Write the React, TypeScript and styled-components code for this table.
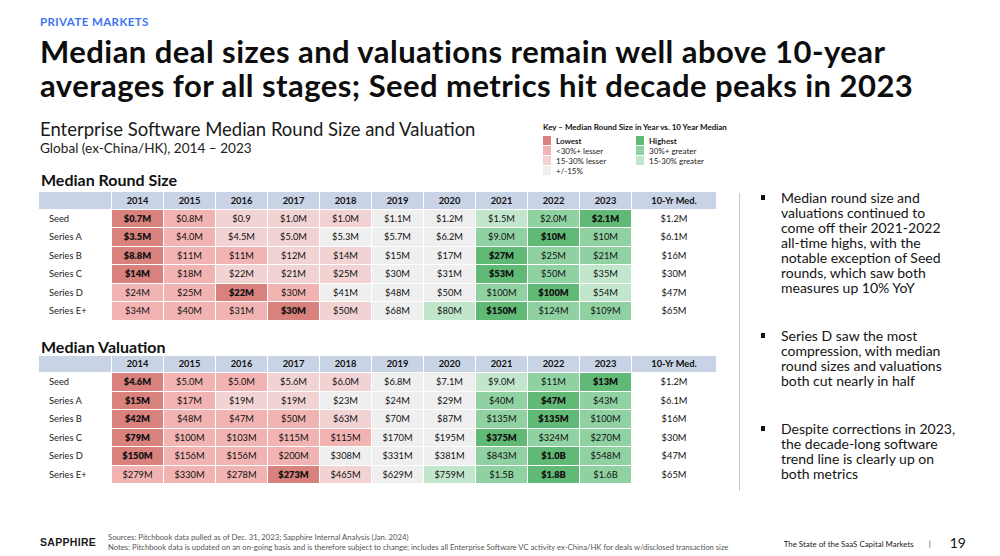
import React from 'react';
import styled, { createGlobalStyle } from 'styled-components';

const GlobalStyle = createGlobalStyle`
  html, body {
    margin: 0;
    padding: 0;
    background: #ffffff;
  }
  body {
    font-family: 'Lato', 'Open Sans', sans-serif;
    color: #111;
  }
`;

type Tone = 'L' | 'R' | 'P' | 'N' | 'G3' | 'G2' | 'H';

const toneColors: Record<Tone, string> = {
  L: '#d9817d',
  R: '#f2b4b2',
  P: '#f2d3d3',
  N: '#efefef',
  G3: '#c2e6cb',
  G2: '#8fd1a1',
  H: '#60b974',
};

type Row = { label: string; cells: [Tone, string][]; median: string };

const years = ['2014', '2015', '2016', '2017', '2018', '2019', '2020', '2021', '2022', '2023'];

// Median round size
const roundSize: Row[] = [
  {
    label: 'Seed',
    cells: [['L', '$0.7M'], ['R', '$0.8M'], ['P', '$0.9'], ['P', '$1.0M'], ['P', '$1.0M'], ['N', '$1.1M'], ['N', '$1.2M'], ['G3', '$1.5M'], ['G2', '$2.0M'], ['H', '$2.1M']],
    median: '$1.2M',
  },
  {
    label: 'Series A',
    cells: [['L', '$3.5M'], ['R', '$4.0M'], ['P', '$4.5M'], ['P', '$5.0M'], ['N', '$5.3M'], ['N', '$5.7M'], ['N', '$6.2M'], ['G2', '$9.0M'], ['H', '$10M'], ['G2', '$10M']],
    median: '$6.1M',
  },
  {
    label: 'Series B',
    cells: [['L', '$8.8M'], ['R', '$11M'], ['R', '$11M'], ['P', '$12M'], ['P', '$14M'], ['N', '$15M'], ['N', '$17M'], ['H', '$27M'], ['G2', '$25M'], ['G2', '$21M']],
    median: '$16M',
  },
  {
    label: 'Series C',
    cells: [['L', '$14M'], ['R', '$18M'], ['P', '$22M'], ['P', '$21M'], ['P', '$25M'], ['N', '$30M'], ['N', '$31M'], ['H', '$53M'], ['G2', '$50M'], ['G3', '$35M']],
    median: '$30M',
  },
  {
    label: 'Series D',
    cells: [['R', '$24M'], ['R', '$25M'], ['L', '$22M'], ['R', '$30M'], ['N', '$41M'], ['N', '$48M'], ['N', '$50M'], ['G2', '$100M'], ['H', '$100M'], ['G3', '$54M']],
    median: '$47M',
  },
  {
    label: 'Series E+',
    cells: [['R', '$34M'], ['R', '$40M'], ['R', '$31M'], ['L', '$30M'], ['P', '$50M'], ['N', '$68M'], ['G3', '$80M'], ['H', '$150M'], ['G2', '$124M'], ['G2', '$109M']],
    median: '$65M',
  },
];

// Median valuation
const valuation: Row[] = [
  {
    label: 'Seed',
    cells: [['L', '$4.6M'], ['R', '$5.0M'], ['R', '$5.0M'], ['P', '$5.6M'], ['P', '$6.0M'], ['N', '$6.8M'], ['N', '$7.1M'], ['G3', '$9.0M'], ['G2', '$11M'], ['H', '$13M']],
    median: '$1.2M',
  },
  {
    label: 'Series A',
    cells: [['L', '$15M'], ['R', '$17M'], ['P', '$19M'], ['P', '$19M'], ['N', '$23M'], ['N', '$24M'], ['N', '$29M'], ['G2', '$40M'], ['H', '$47M'], ['G2', '$43M']],
    median: '$6.1M',
  },
  {
    label: 'Series B',
    cells: [['L', '$42M'], ['R', '$48M'], ['R', '$47M'], ['R', '$50M'], ['P', '$63M'], ['N', '$70M'], ['N', '$87M'], ['G2', '$135M'], ['H', '$135M'], ['G2', '$100M']],
    median: '$16M',
  },
  {
    label: 'Series C',
    cells: [['L', '$79M'], ['R', '$100M'], ['R', '$103M'], ['R', '$115M'], ['R', '$115M'], ['N', '$170M'], ['N', '$195M'], ['H', '$375M'], ['G2', '$324M'], ['G2', '$270M']],
    median: '$30M',
  },
  {
    label: 'Series D',
    cells: [['L', '$150M'], ['R', '$156M'], ['R', '$156M'], ['R', '$200M'], ['N', '$308M'], ['N', '$331M'], ['N', '$381M'], ['G2', '$843M'], ['H', '$1.0B'], ['G2', '$548M']],
    median: '$47M',
  },
  {
    label: 'Series E+',
    cells: [['R', '$279M'], ['R', '$330M'], ['R', '$278M'], ['L', '$273M'], ['P', '$465M'], ['N', '$629M'], ['G3', '$759M'], ['G2', '$1.5B'], ['H', '$1.8B'], ['G2', '$1.6B']],
    median: '$65M',
  },
];

const Page = styled.div`
  width: 1000px;
  height: 556px;
  box-sizing: border-box;
  padding: 15px 0 0 40px;
  display: flex;
  flex-direction: column;
  overflow: hidden;
  position: relative;
`;

const Eyebrow = styled.div`
  font-size: 11.5px;
  line-height: 14px;
  font-weight: 700;
  color: #3d74f2;
  letter-spacing: 0.4px;
`;

const Title = styled.h1`
  margin: 5px 0 0;
  font-size: 31px;
  line-height: 34px;
  font-weight: 700;
  color: #0d0d0d;
  letter-spacing: 0.45px;
  white-space: nowrap;
`;

const TopRow = styled.div`
  display: grid;
  grid-template-columns: 503px auto;
  margin-top: 16px;
  height: 52px;
`;

const Subtitle = styled.div`
  font-size: 18.5px;
  line-height: 22px;
  color: #1a1a1a;
  font-weight: 400;
`;

const SubNote = styled.div`
  font-size: 13.6px;
  line-height: 17px;
  color: #222;
`;

const Legend = styled.div`
  padding-top: 4px;
`;

const LegendTitle = styled.div`
  font-size: 8px;
  line-height: 10px;
  font-weight: 700;
  color: #111;
`;

const LegendGrid = styled.div`
  display: grid;
  grid-template-columns: 93px auto;
  margin-top: 4px;
`;

const LegendList = styled.div`
  display: flex;
  flex-direction: column;
  gap: 1px;
`;

const LegendItem = styled.div<{ $strong?: boolean }>`
  display: flex;
  align-items: center;
  gap: 5px;
  height: 9px;
  font-size: 8px;
  font-weight: ${(p) => (p.$strong ? 700 : 400)};
  color: #222;
`;

const Swatch = styled.span<{ $tone: Tone }>`
  width: 8px;
  height: 9px;
  background: ${(p) => toneColors[p.$tone]};
`;

const Body = styled.div`
  display: flex;
  align-items: flex-start;
`;

const Tables = styled.div`
  width: 679px;
  margin-left: -1px;
  display: flex;
  flex-direction: column;
`;

const SectionHeading = styled.div<{ $top: number }>`
  margin: ${(p) => p.$top}px 0 0 2px;
  font-size: 16px;
  line-height: 19px;
  font-weight: 700;
  color: #111;
`;

const Grid = styled.div<{ $top: number }>`
  margin-top: ${(p) => p.$top}px;
  display: grid;
  grid-template-columns: 72px repeat(10, 51px) 84px;
  grid-template-rows: 16.5px;
  grid-auto-rows: 17.5px;
  gap: 1px;
  font-size: 9.3px;
`;

const HeadCell = styled.div`
  background: #c9d3e6;
  font-weight: 700;
  display: flex;
  align-items: center;
  justify-content: center;
  color: #111;
`;

const LabelCell = styled.div`
  display: flex;
  align-items: center;
  padding-left: 10px;
  color: #1a1a1a;
`;

const ValueCell = styled.div<{ $tone?: Tone }>`
  background: ${(p) => (p.$tone ? toneColors[p.$tone] : 'transparent')};
  font-weight: ${(p) => (p.$tone === 'L' || p.$tone === 'H' ? 800 : 400)};
  display: flex;
  align-items: center;
  justify-content: center;
  color: #111;
`;

const Divider = styled.div`
  width: 1px;
  height: 298px;
  margin: 23px 0 0 21px;
  background: #c8c8c8;
`;

const Bullets = styled.ul`
  list-style: none;
  margin: 20px 0 0 21px;
  padding: 0;
  display: flex;
  flex-direction: column;
  gap: 33px;
`;

const Bullet = styled.li`
  position: relative;
  padding-left: 20px;
  font-size: 14px;
  line-height: 15px;
  color: #141414;

  &::before {
    content: '';
    position: absolute;
    left: 0;
    top: 5px;
    width: 4px;
    height: 5px;
    background: #111;
  }
`;

const Footer = styled.footer`
  position: absolute;
  left: 40px;
  right: 34px;
  bottom: 2px;
  display: flex;
  align-items: center;
  height: 24px;
`;

const Logo = styled.div`
  font-family: 'Liberation Sans', Arial, sans-serif;
  font-weight: 700;
  font-size: 10.5px;
  letter-spacing: 0.3px;
  color: #1b1b1b;
  width: 68px;
`;

const Sources = styled.div`
  font-size: 7.7px;
  line-height: 9.5px;
  color: #555;
  flex: 1;
  padding-top: 1px;
  white-space: nowrap;
`;

const DeckName = styled.div`
  font-size: 7.9px;
  color: #222;
  margin-top: 4px;
`;

const Pipe = styled.span`
  font-size: 8px;
  color: #444;
  margin: 4px 19px 0 15px;
`;

const PageNum = styled.div`
  font-size: 14px;
  color: #111;
`;

const DataTable: React.FC<{ rows: Row[]; top: number }> = ({ rows, top }) => (
  <Grid $top={top}>
    <HeadCell />
    {years.map((y) => (
      <HeadCell key={y}>{y}</HeadCell>
    ))}
    <HeadCell>10-Yr Med.</HeadCell>
    {rows.map((row) => (
      <React.Fragment key={row.label}>
        <LabelCell>{row.label}</LabelCell>
        {row.cells.map(([tone, value], i) => (
          <ValueCell key={i} $tone={tone}>
            {value}
          </ValueCell>
        ))}
        <ValueCell>{row.median}</ValueCell>
      </React.Fragment>
    ))}
  </Grid>
);

export default function App() {
  return (
    <>
      <GlobalStyle />
      <Page>
        <Eyebrow>PRIVATE MARKETS</Eyebrow>
        <Title>
          Median deal sizes and valuations remain well above 10-year
          <br />
          averages for all stages; Seed metrics hit decade peaks in 2023
        </Title>

        <TopRow>
          <div>
            <Subtitle>Enterprise Software Median Round Size and Valuation</Subtitle>
            <SubNote>Global (ex-China/HK), 2014 – 2023</SubNote>
          </div>
          <Legend>
            <LegendTitle>Key – Median Round Size in Year vs. 10 Year Median</LegendTitle>
            <LegendGrid>
              <LegendList>
                <LegendItem $strong>
                  <Swatch $tone="L" />
                  Lowest
                </LegendItem>
                <LegendItem>
                  <Swatch $tone="R" />
                  &lt;30%+ lesser
                </LegendItem>
                <LegendItem>
                  <Swatch $tone="P" />
                  15-30% lesser
                </LegendItem>
                <LegendItem>
                  <Swatch $tone="N" />
                  +/-15%
                </LegendItem>
              </LegendList>
              <LegendList>
                <LegendItem $strong>
                  <Swatch $tone="H" />
                  Highest
                </LegendItem>
                <LegendItem>
                  <Swatch $tone="G2" />
                  30%+ greater
                </LegendItem>
                <LegendItem>
                  <Swatch $tone="G3" />
                  15-30% greater
                </LegendItem>
              </LegendList>
            </LegendGrid>
          </Legend>
        </TopRow>

        <Body>
          <Tables>
            <SectionHeading $top={0}>Median Round Size</SectionHeading>
            <DataTable rows={roundSize} top={3} />
            <SectionHeading $top={17}>Median Valuation</SectionHeading>
            <DataTable rows={valuation} top={0} />
          </Tables>
          <Divider />
          <Bullets>
            <Bullet>
              Median round size and
              <br />
              valuations continued to
              <br />
              come off their 2021-2022
              <br />
              all-time highs, with the
              <br />
              notable exception of Seed
              <br />
              rounds, which saw both
              <br />
              measures up 10% YoY
            </Bullet>
            <Bullet>
              Series D saw the most
              <br />
              compression, with median
              <br />
              round sizes and valuations
              <br />
              both cut nearly in half
            </Bullet>
            <Bullet>
              Despite corrections in 2023,
              <br />
              the decade-long software
              <br />
              trend line is clearly up on
              <br />
              both metrics
            </Bullet>
          </Bullets>
        </Body>

        <Footer>
          <Logo>SAPPHIRE</Logo>
          <Sources>
            Sources: Pitchbook data pulled as of Dec. 31, 2023; Sapphire Internal Analysis (Jan. 2024)
            <br />
            Notes: Pitchbook data is updated on an on-going basis and is therefore subject to change; includes all
            Enterprise Software VC activity ex-China/HK for deals w/disclosed transaction size
          </Sources>
          <DeckName>The State of the SaaS Capital Markets</DeckName>
          <Pipe>|</Pipe>
          <PageNum>19</PageNum>
        </Footer>
      </Page>
    </>
  );
}
